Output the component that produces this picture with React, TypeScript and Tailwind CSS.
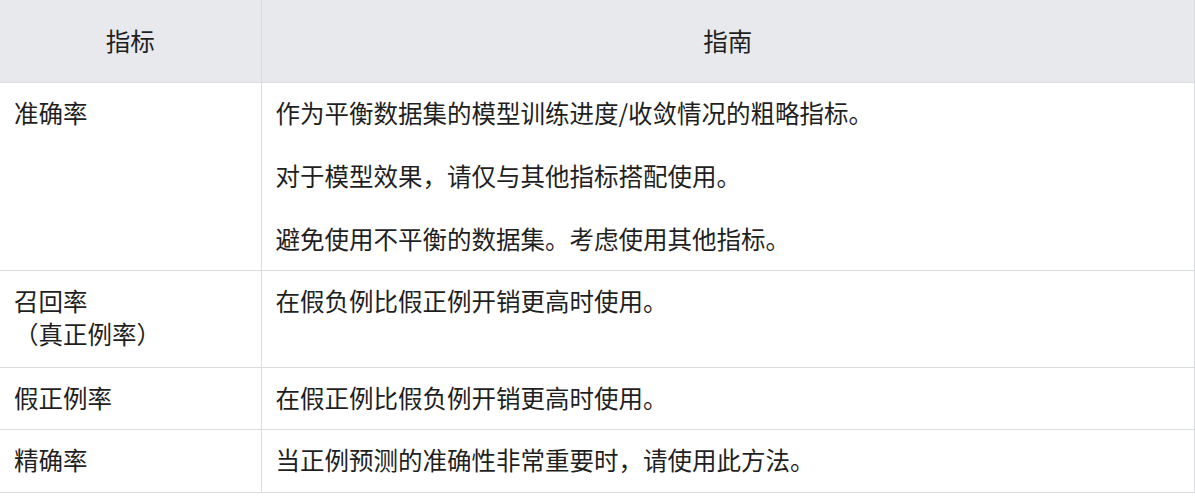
import React from "react";

const rows: { metric: React.ReactNode; guide: string[]; pb: string }[] = [
  {
    metric: "准确率",
    guide: [
      "作为平衡数据集的模型训练进度/收敛情况的粗略指标。",
      "对于模型效果，请仅与其他指标搭配使用。",
      "避免使用不平衡的数据集。考虑使用其他指标。",
    ],
    pb: "pb-[15px]",
  },
  {
    metric: (
      <>
        召回率
        <br />
        （真正例率）
      </>
    ),
    guide: ["在假负例比假正例开销更高时使用。"],
    pb: "pb-[17px]",
  },
  { metric: "假正例率", guide: ["在假正例比假负例开销更高时使用。"], pb: "pb-[15px]" },
  { metric: "精确率", guide: ["当正例预测的准确性非常重要时，请使用此方法。"], pb: "pb-[16px]" },
];

export default function App() {
  return (
    <div
      className="w-[1195px] h-[496px] bg-white text-[#1f1f1f] text-[24.5px] leading-[33px]"
      style={{ fontFamily: '"Microsoft YaHei", "Noto Sans CJK SC", "Noto Sans", sans-serif' }}
    >
      <table className="w-[1195px] border-collapse table-fixed">
        <colgroup>
          <col className="w-[261px]" />
          <col />
        </colgroup>
        <thead>
          <tr className="bg-[#e8e9ed]">
            <th className="h-[82px] font-normal text-center border-r border-b border-[#dadce0] px-[14px]">
              指标
            </th>
            <th className="h-[82px] font-normal text-center border-r border-b border-[#dadce0] px-[14px]">
              指南
            </th>
          </tr>
        </thead>
        <tbody>
          {rows.map((r, i) => (
            <tr key={i}>
              <td
                className={`align-top text-left border-r border-b border-[#dadce0] pl-[14px] pr-[14px] pt-[13px] ${r.pb}`}
              >
                {r.metric}
              </td>
              <td
                className={`align-top text-left border-r border-b border-[#dadce0] pl-[14px] pr-[14px] pt-[13px] ${r.pb}`}
              >
                <div className="flex flex-col gap-[30px]">
                  {r.guide.map((g, j) => (
                    <p key={j}>{g}</p>
                  ))}
                </div>
              </td>
            </tr>
          ))}
        </tbody>
      </table>
    </div>
  );
}
